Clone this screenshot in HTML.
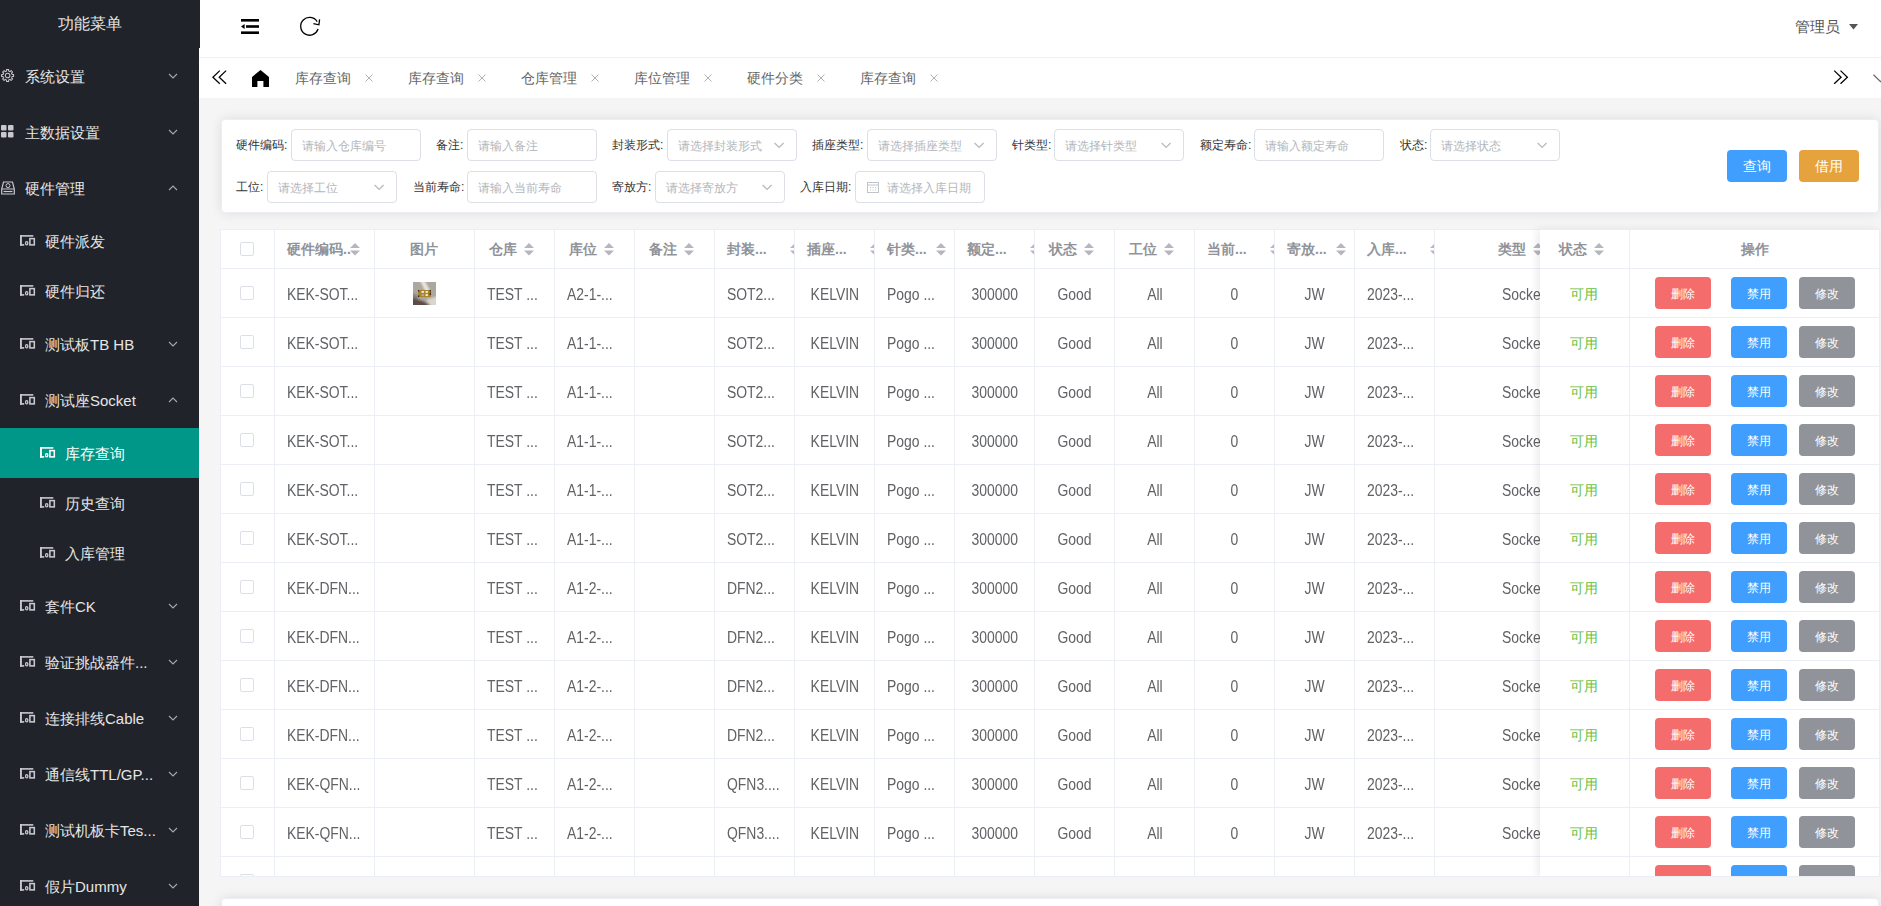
<!DOCTYPE html><html><head><meta charset="utf-8"><title>库存查询</title><style>
*{box-sizing:border-box;margin:0;padding:0}
html,body{width:1881px;height:906px;overflow:hidden;background:#f5f5f5;font-family:"Liberation Sans",sans-serif;position:relative}
.a{position:absolute;white-space:nowrap}
#side{position:absolute;left:0;top:0;width:199px;height:906px;background:#20232a;overflow:hidden}
.st{color:#e6e6e6;font-size:15px;line-height:16px}
.ac{background:#009688}
#hdr{position:absolute;left:199px;top:0;width:1682px;height:58px;background:#fff;border-bottom:1px solid #f0f0f0}
#tabs{position:absolute;left:199px;top:58px;width:1682px;height:40px;background:#fff}
.tb{font-size:14px;color:#666;line-height:16px}
.tx{font-size:12px;color:#b5b5b5;line-height:12px}
#card{position:absolute;left:221px;top:119px;width:1658px;height:94px;background:#fff;border-radius:4px;border:1px solid #ebeef5;box-shadow:0 0 12px rgba(0,0,0,.10)}
.lb{font-size:12px;color:#333;line-height:14px}
.inp{position:absolute;height:32px;border:1px solid #dcdfe6;border-radius:4px;background:#fff}
.ph{font-size:12px;color:#b3b6bc;line-height:14px}
.btn{position:absolute;height:32px;width:60px;border-radius:4px;color:#fff;font-size:14px;text-align:center;line-height:32px}
.hl{position:absolute;height:1px;background:#ebeef5}
.vl{position:absolute;width:1px;background:#ebeef5}
.th{font-size:14px;color:#909399;font-weight:bold;line-height:16px}
.td{font-size:16px;color:#606266;line-height:16px;transform:scaleX(.87)}
.cb{position:absolute;width:14px;height:14px;border:1px solid #dcdfe6;border-radius:2px;background:#fff}
.ob{position:absolute;width:56px;height:32px;border-radius:4px;color:#fff;font-size:12px;text-align:center;line-height:34px;overflow:hidden}
</style></head><body>
<div id="side">
<div class="a st" style="left:58px;top:15px;font-size:16px;line-height:17px;color:#e3e3e3">功能菜单</div>
<svg class="a" style="left:1px;top:69px" width="14" height="14" viewBox="0 0 14 14"><path d="M5.14 2.14 L5.57 2.02 L5.54 0.49 L7.66 0.49 L7.63 2.02 L8.06 2.14 L8.65 2.38 L9.04 2.60 L10.10 1.50 L11.60 3.00 L10.50 4.06 L10.72 4.45 L10.96 5.04 L11.08 5.47 L12.61 5.44 L12.61 7.56 L11.08 7.53 L10.96 7.96 L10.72 8.55 L10.50 8.94 L11.60 10.00 L10.10 11.50 L9.04 10.40 L8.65 10.62 L8.06 10.86 L7.63 10.98 L7.66 12.51 L5.54 12.51 L5.57 10.98 L5.14 10.86 L4.55 10.62 L4.16 10.40 L3.10 11.50 L1.60 10.00 L2.70 8.94 L2.48 8.55 L2.24 7.96 L2.12 7.53 L0.59 7.56 L0.59 5.44 L2.12 5.47 L2.24 5.04 L2.48 4.45 L2.70 4.06 L1.60 3.00 L3.10 1.50 L4.16 2.60 L4.55 2.38 Z" fill="none" stroke="#c8c8d0" stroke-width="1.05" stroke-linejoin="round"/><circle cx="6.6" cy="6.5" r="2.3" fill="none" stroke="#c8c8d0" stroke-width="1.05"/></svg>
<div class="a st" style="left:25px;top:69px">系统设置</div>
<svg class="a" style="left:168px;top:73px" width="10" height="6" viewBox="0 0 10 6"><path d="M1 1 L5 5 L9 1" fill="none" stroke="#a9a9ad" stroke-width="1.1"/></svg>
<svg class="a" style="left:1px;top:125px" width="13" height="13" viewBox="0 0 13 13" fill="#c8c8d0"><rect x="0" y="0" width="5.5" height="5.5" rx="1"/><rect x="7" y="0" width="5.5" height="5.5" rx="1"/><rect x="0" y="7" width="5.5" height="5.5" rx="1"/><rect x="7" y="7" width="5.5" height="5.5" rx="1"/></svg>
<div class="a st" style="left:25px;top:125px">主数据设置</div>
<svg class="a" style="left:168px;top:129px" width="10" height="6" viewBox="0 0 10 6"><path d="M1 1 L5 5 L9 1" fill="none" stroke="#a9a9ad" stroke-width="1.1"/></svg>
<svg class="a" style="left:1px;top:181px" width="14" height="14" viewBox="0 0 14 14"><path d="M2.5 1 H11.5 L13.3 8 V13 H0.7 V8 Z M0.7 8 H13.3" fill="none" stroke="#c8c8d0" stroke-width="1.2"/><circle cx="7" cy="4.6" r="2" fill="none" stroke="#c8c8d0" stroke-width="1"/><path d="M2.5 10.5 H11.5" stroke="#c8c8d0" stroke-width="1.2"/></svg>
<div class="a st" style="left:25px;top:181px">硬件管理</div>
<svg class="a" style="left:168px;top:185px" width="10" height="6" viewBox="0 0 10 6"><path d="M1 5 L5 1 L9 5" fill="none" stroke="#a9a9ad" stroke-width="1.1"/></svg>
<svg class="a" style="left:20px;top:235px" width="16" height="11" viewBox="0 0 16 11" fill="#c8c8d0"><rect x="0" y="0.1" width="13.3" height="1.6"/><rect x="0" y="0" width="1.9" height="10.7"/><rect x="0" y="9.1" width="4.2" height="1.6"/><ellipse cx="6.7" cy="8.3" rx="1.15" ry="1.65" fill="none" stroke="#c8c8d0" stroke-width="1.3"/><rect x="9.9" y="3.6" width="4.4" height="6.3" fill="none" stroke="#c8c8d0" stroke-width="1.55"/></svg>
<div class="a st" style="left:45px;top:234px;">硬件派发</div>
<svg class="a" style="left:20px;top:285px" width="16" height="11" viewBox="0 0 16 11" fill="#c8c8d0"><rect x="0" y="0.1" width="13.3" height="1.6"/><rect x="0" y="0" width="1.9" height="10.7"/><rect x="0" y="9.1" width="4.2" height="1.6"/><ellipse cx="6.7" cy="8.3" rx="1.15" ry="1.65" fill="none" stroke="#c8c8d0" stroke-width="1.3"/><rect x="9.9" y="3.6" width="4.4" height="6.3" fill="none" stroke="#c8c8d0" stroke-width="1.55"/></svg>
<div class="a st" style="left:45px;top:284px;">硬件归还</div>
<svg class="a" style="left:20px;top:338px" width="16" height="11" viewBox="0 0 16 11" fill="#c8c8d0"><rect x="0" y="0.1" width="13.3" height="1.6"/><rect x="0" y="0" width="1.9" height="10.7"/><rect x="0" y="9.1" width="4.2" height="1.6"/><ellipse cx="6.7" cy="8.3" rx="1.15" ry="1.65" fill="none" stroke="#c8c8d0" stroke-width="1.3"/><rect x="9.9" y="3.6" width="4.4" height="6.3" fill="none" stroke="#c8c8d0" stroke-width="1.55"/></svg>
<div class="a st" style="left:45px;top:337px;">测试板TB HB</div>
<svg class="a" style="left:168px;top:341px" width="10" height="6" viewBox="0 0 10 6"><path d="M1 1 L5 5 L9 1" fill="none" stroke="#a9a9ad" stroke-width="1.1"/></svg>
<svg class="a" style="left:20px;top:394px" width="16" height="11" viewBox="0 0 16 11" fill="#c8c8d0"><rect x="0" y="0.1" width="13.3" height="1.6"/><rect x="0" y="0" width="1.9" height="10.7"/><rect x="0" y="9.1" width="4.2" height="1.6"/><ellipse cx="6.7" cy="8.3" rx="1.15" ry="1.65" fill="none" stroke="#c8c8d0" stroke-width="1.3"/><rect x="9.9" y="3.6" width="4.4" height="6.3" fill="none" stroke="#c8c8d0" stroke-width="1.55"/></svg>
<div class="a st" style="left:45px;top:393px;">测试座Socket</div>
<svg class="a" style="left:168px;top:397px" width="10" height="6" viewBox="0 0 10 6"><path d="M1 5 L5 1 L9 5" fill="none" stroke="#a9a9ad" stroke-width="1.1"/></svg>
<div class="a ac" style="left:0;top:428px;width:199px;height:50px"></div>
<svg class="a" style="left:40px;top:447px" width="16" height="11" viewBox="0 0 16 11" fill="#ffffff"><rect x="0" y="0.1" width="13.3" height="1.6"/><rect x="0" y="0" width="1.9" height="10.7"/><rect x="0" y="9.1" width="4.2" height="1.6"/><ellipse cx="6.7" cy="8.3" rx="1.15" ry="1.65" fill="none" stroke="#ffffff" stroke-width="1.3"/><rect x="9.9" y="3.6" width="4.4" height="6.3" fill="none" stroke="#ffffff" stroke-width="1.55"/></svg>
<div class="a st" style="left:65px;top:446px;color:#fff;">库存查询</div>
<svg class="a" style="left:40px;top:497px" width="16" height="11" viewBox="0 0 16 11" fill="#c8c8d0"><rect x="0" y="0.1" width="13.3" height="1.6"/><rect x="0" y="0" width="1.9" height="10.7"/><rect x="0" y="9.1" width="4.2" height="1.6"/><ellipse cx="6.7" cy="8.3" rx="1.15" ry="1.65" fill="none" stroke="#c8c8d0" stroke-width="1.3"/><rect x="9.9" y="3.6" width="4.4" height="6.3" fill="none" stroke="#c8c8d0" stroke-width="1.55"/></svg>
<div class="a st" style="left:65px;top:496px;">历史查询</div>
<svg class="a" style="left:40px;top:547px" width="16" height="11" viewBox="0 0 16 11" fill="#c8c8d0"><rect x="0" y="0.1" width="13.3" height="1.6"/><rect x="0" y="0" width="1.9" height="10.7"/><rect x="0" y="9.1" width="4.2" height="1.6"/><ellipse cx="6.7" cy="8.3" rx="1.15" ry="1.65" fill="none" stroke="#c8c8d0" stroke-width="1.3"/><rect x="9.9" y="3.6" width="4.4" height="6.3" fill="none" stroke="#c8c8d0" stroke-width="1.55"/></svg>
<div class="a st" style="left:65px;top:546px;">入库管理</div>
<svg class="a" style="left:20px;top:600px" width="16" height="11" viewBox="0 0 16 11" fill="#c8c8d0"><rect x="0" y="0.1" width="13.3" height="1.6"/><rect x="0" y="0" width="1.9" height="10.7"/><rect x="0" y="9.1" width="4.2" height="1.6"/><ellipse cx="6.7" cy="8.3" rx="1.15" ry="1.65" fill="none" stroke="#c8c8d0" stroke-width="1.3"/><rect x="9.9" y="3.6" width="4.4" height="6.3" fill="none" stroke="#c8c8d0" stroke-width="1.55"/></svg>
<div class="a st" style="left:45px;top:599px;">套件CK</div>
<svg class="a" style="left:168px;top:603px" width="10" height="6" viewBox="0 0 10 6"><path d="M1 1 L5 5 L9 1" fill="none" stroke="#a9a9ad" stroke-width="1.1"/></svg>
<svg class="a" style="left:20px;top:656px" width="16" height="11" viewBox="0 0 16 11" fill="#c8c8d0"><rect x="0" y="0.1" width="13.3" height="1.6"/><rect x="0" y="0" width="1.9" height="10.7"/><rect x="0" y="9.1" width="4.2" height="1.6"/><ellipse cx="6.7" cy="8.3" rx="1.15" ry="1.65" fill="none" stroke="#c8c8d0" stroke-width="1.3"/><rect x="9.9" y="3.6" width="4.4" height="6.3" fill="none" stroke="#c8c8d0" stroke-width="1.55"/></svg>
<div class="a st" style="left:45px;top:655px;">验证挑战器件...</div>
<svg class="a" style="left:168px;top:659px" width="10" height="6" viewBox="0 0 10 6"><path d="M1 1 L5 5 L9 1" fill="none" stroke="#a9a9ad" stroke-width="1.1"/></svg>
<svg class="a" style="left:20px;top:712px" width="16" height="11" viewBox="0 0 16 11" fill="#c8c8d0"><rect x="0" y="0.1" width="13.3" height="1.6"/><rect x="0" y="0" width="1.9" height="10.7"/><rect x="0" y="9.1" width="4.2" height="1.6"/><ellipse cx="6.7" cy="8.3" rx="1.15" ry="1.65" fill="none" stroke="#c8c8d0" stroke-width="1.3"/><rect x="9.9" y="3.6" width="4.4" height="6.3" fill="none" stroke="#c8c8d0" stroke-width="1.55"/></svg>
<div class="a st" style="left:45px;top:711px;">连接排线Cable</div>
<svg class="a" style="left:168px;top:715px" width="10" height="6" viewBox="0 0 10 6"><path d="M1 1 L5 5 L9 1" fill="none" stroke="#a9a9ad" stroke-width="1.1"/></svg>
<svg class="a" style="left:20px;top:768px" width="16" height="11" viewBox="0 0 16 11" fill="#c8c8d0"><rect x="0" y="0.1" width="13.3" height="1.6"/><rect x="0" y="0" width="1.9" height="10.7"/><rect x="0" y="9.1" width="4.2" height="1.6"/><ellipse cx="6.7" cy="8.3" rx="1.15" ry="1.65" fill="none" stroke="#c8c8d0" stroke-width="1.3"/><rect x="9.9" y="3.6" width="4.4" height="6.3" fill="none" stroke="#c8c8d0" stroke-width="1.55"/></svg>
<div class="a st" style="left:45px;top:767px;">通信线TTL/GP...</div>
<svg class="a" style="left:168px;top:771px" width="10" height="6" viewBox="0 0 10 6"><path d="M1 1 L5 5 L9 1" fill="none" stroke="#a9a9ad" stroke-width="1.1"/></svg>
<svg class="a" style="left:20px;top:824px" width="16" height="11" viewBox="0 0 16 11" fill="#c8c8d0"><rect x="0" y="0.1" width="13.3" height="1.6"/><rect x="0" y="0" width="1.9" height="10.7"/><rect x="0" y="9.1" width="4.2" height="1.6"/><ellipse cx="6.7" cy="8.3" rx="1.15" ry="1.65" fill="none" stroke="#c8c8d0" stroke-width="1.3"/><rect x="9.9" y="3.6" width="4.4" height="6.3" fill="none" stroke="#c8c8d0" stroke-width="1.55"/></svg>
<div class="a st" style="left:45px;top:823px;">测试机板卡Tes...</div>
<svg class="a" style="left:168px;top:827px" width="10" height="6" viewBox="0 0 10 6"><path d="M1 1 L5 5 L9 1" fill="none" stroke="#a9a9ad" stroke-width="1.1"/></svg>
<svg class="a" style="left:20px;top:880px" width="16" height="11" viewBox="0 0 16 11" fill="#c8c8d0"><rect x="0" y="0.1" width="13.3" height="1.6"/><rect x="0" y="0" width="1.9" height="10.7"/><rect x="0" y="9.1" width="4.2" height="1.6"/><ellipse cx="6.7" cy="8.3" rx="1.15" ry="1.65" fill="none" stroke="#c8c8d0" stroke-width="1.3"/><rect x="9.9" y="3.6" width="4.4" height="6.3" fill="none" stroke="#c8c8d0" stroke-width="1.55"/></svg>
<div class="a st" style="left:45px;top:879px;">假片Dummy</div>
<svg class="a" style="left:168px;top:883px" width="10" height="6" viewBox="0 0 10 6"><path d="M1 1 L5 5 L9 1" fill="none" stroke="#a9a9ad" stroke-width="1.1"/></svg>
</div>
<div id="hdr"></div>
<div class="a" style="left:199px;top:0;width:1px;height:48px;background:#20232a"></div>
<svg class="a" style="left:241px;top:19px" width="18" height="15" viewBox="0 0 18 15" fill="#000"><rect x="0" y="0" width="18" height="2.6"/><rect x="5" y="6.2" width="13" height="2.6"/><rect x="0" y="12.4" width="18" height="2.6"/><path d="M0 7.5 L3.6 5 V10 Z"/></svg>
<svg class="a" style="left:299px;top:16px" width="22" height="21" viewBox="0 0 22 21"><path d="M19.06 13.05 A8.9 8.9 0 1 1 18.15 5.58" fill="none" stroke="#000" stroke-width="1.3"/><path d="M14.4 7.7 L19.9 8.8 L20.6 3.3" fill="none" stroke="#000" stroke-width="1.3" stroke-linejoin="miter"/></svg>
<div class="a" style="left:1795px;top:19px;font-size:15px;color:#555;line-height:16px">管理员</div>
<svg class="a" style="left:1849px;top:24px" width="9" height="6" viewBox="0 0 9 6"><path d="M0 0 H9 L4.5 5.5 Z" fill="#555"/></svg>
<div id="tabs"></div>
<svg class="a" style="left:212px;top:70px" width="16" height="15" viewBox="0 0 16 15"><path d="M7.8 0.6 L0.9 7.2 L7.8 13.8 M14.1 0.6 L7.2 7.2 L14.1 13.8" fill="none" stroke="#000" stroke-width="1.25"/></svg>
<svg class="a" style="left:251px;top:70px" width="19" height="17" viewBox="0 0 19 17"><path d="M9.5 0 L18 6.9 V17 H12.4 V11.1 H6.4 V17 H1 V6.9 Z" fill="#000"/></svg>
<div class="a tb" style="left:295px;top:70px">库存查询</div>
<svg class="a" style="left:365px;top:74px" width="8" height="8" viewBox="0 0 8 8"><path d="M0.5 0.5 L7.5 7.5 M7.5 0.5 L0.5 7.5" stroke="#b0b0b0" stroke-width="1"/></svg>
<div class="a tb" style="left:408px;top:70px">库存查询</div>
<svg class="a" style="left:478px;top:74px" width="8" height="8" viewBox="0 0 8 8"><path d="M0.5 0.5 L7.5 7.5 M7.5 0.5 L0.5 7.5" stroke="#b0b0b0" stroke-width="1"/></svg>
<div class="a tb" style="left:521px;top:70px">仓库管理</div>
<svg class="a" style="left:591px;top:74px" width="8" height="8" viewBox="0 0 8 8"><path d="M0.5 0.5 L7.5 7.5 M7.5 0.5 L0.5 7.5" stroke="#b0b0b0" stroke-width="1"/></svg>
<div class="a tb" style="left:634px;top:70px">库位管理</div>
<svg class="a" style="left:704px;top:74px" width="8" height="8" viewBox="0 0 8 8"><path d="M0.5 0.5 L7.5 7.5 M7.5 0.5 L0.5 7.5" stroke="#b0b0b0" stroke-width="1"/></svg>
<div class="a tb" style="left:747px;top:70px">硬件分类</div>
<svg class="a" style="left:817px;top:74px" width="8" height="8" viewBox="0 0 8 8"><path d="M0.5 0.5 L7.5 7.5 M7.5 0.5 L0.5 7.5" stroke="#b0b0b0" stroke-width="1"/></svg>
<div class="a tb" style="left:860px;top:70px">库存查询</div>
<svg class="a" style="left:930px;top:74px" width="8" height="8" viewBox="0 0 8 8"><path d="M0.5 0.5 L7.5 7.5 M7.5 0.5 L0.5 7.5" stroke="#b0b0b0" stroke-width="1"/></svg>
<svg class="a" style="left:1833px;top:70px" width="16" height="14" viewBox="0 0 16 14"><path d="M1.2 0.6 L8.1 7.2 L1.2 13.8 M7.5 0.6 L14.4 7.2 L7.5 13.8" fill="none" stroke="#000" stroke-width="1.25"/></svg>
<svg class="a" style="left:1873px;top:74px" width="9" height="9" viewBox="0 0 9 9"><path d="M0.5 0.7 L7.6 7.6 L9 6.4" fill="none" stroke="#666" stroke-width="1.2"/></svg>
<div id="card"></div>
<div class="a lb" style="left:236px;top:138px">硬件编码:</div>
<div class="inp" style="left:291px;top:129px;width:130px"></div>
<div class="a ph" style="left:302px;top:139px">请输入仓库编号</div>
<div class="a lb" style="left:436px;top:138px">备注:</div>
<div class="inp" style="left:467px;top:129px;width:130px"></div>
<div class="a ph" style="left:478px;top:139px">请输入备注</div>
<div class="a lb" style="left:612px;top:138px">封装形式:</div>
<div class="inp" style="left:667px;top:129px;width:130px"></div>
<div class="a ph" style="left:678px;top:139px">请选择封装形式</div>
<svg class="a" style="left:774px;top:142px" width="11" height="7" viewBox="0 0 11 7"><path d="M0.6 0.9 L5.1 5.4 L9.6 0.9" fill="none" stroke="#b9bbbf" stroke-width="1.35"/></svg>
<div class="a lb" style="left:812px;top:138px">插座类型:</div>
<div class="inp" style="left:867px;top:129px;width:130px"></div>
<div class="a ph" style="left:878px;top:139px">请选择插座类型</div>
<svg class="a" style="left:974px;top:142px" width="11" height="7" viewBox="0 0 11 7"><path d="M0.6 0.9 L5.1 5.4 L9.6 0.9" fill="none" stroke="#b9bbbf" stroke-width="1.35"/></svg>
<div class="a lb" style="left:1012px;top:138px">针类型:</div>
<div class="inp" style="left:1054px;top:129px;width:130px"></div>
<div class="a ph" style="left:1065px;top:139px">请选择针类型</div>
<svg class="a" style="left:1161px;top:142px" width="11" height="7" viewBox="0 0 11 7"><path d="M0.6 0.9 L5.1 5.4 L9.6 0.9" fill="none" stroke="#b9bbbf" stroke-width="1.35"/></svg>
<div class="a lb" style="left:1200px;top:138px">额定寿命:</div>
<div class="inp" style="left:1254px;top:129px;width:130px"></div>
<div class="a ph" style="left:1265px;top:139px">请输入额定寿命</div>
<div class="a lb" style="left:1400px;top:138px">状态:</div>
<div class="inp" style="left:1430px;top:129px;width:130px"></div>
<div class="a ph" style="left:1441px;top:139px">请选择状态</div>
<svg class="a" style="left:1537px;top:142px" width="11" height="7" viewBox="0 0 11 7"><path d="M0.6 0.9 L5.1 5.4 L9.6 0.9" fill="none" stroke="#b9bbbf" stroke-width="1.35"/></svg>
<div class="a lb" style="left:236px;top:180px">工位:</div>
<div class="inp" style="left:267px;top:171px;width:130px"></div>
<div class="a ph" style="left:278px;top:181px">请选择工位</div>
<svg class="a" style="left:374px;top:184px" width="11" height="7" viewBox="0 0 11 7"><path d="M0.6 0.9 L5.1 5.4 L9.6 0.9" fill="none" stroke="#b9bbbf" stroke-width="1.35"/></svg>
<div class="a lb" style="left:413px;top:180px">当前寿命:</div>
<div class="inp" style="left:467px;top:171px;width:130px"></div>
<div class="a ph" style="left:478px;top:181px">请输入当前寿命</div>
<div class="a lb" style="left:612px;top:180px">寄放方:</div>
<div class="inp" style="left:655px;top:171px;width:130px"></div>
<div class="a ph" style="left:666px;top:181px">请选择寄放方</div>
<svg class="a" style="left:762px;top:184px" width="11" height="7" viewBox="0 0 11 7"><path d="M0.6 0.9 L5.1 5.4 L9.6 0.9" fill="none" stroke="#b9bbbf" stroke-width="1.35"/></svg>
<div class="a lb" style="left:800px;top:180px">入库日期:</div>
<div class="inp" style="left:855px;top:171px;width:130px"></div>
<svg class="a" style="left:867px;top:181px" width="12" height="12" viewBox="0 0 12 12"><rect x="0.5" y="1.5" width="11" height="10" fill="none" stroke="#c0c4cc"/><path d="M0.5 4 H11.5 M3 6.5 h1 M5.5 6.5 h1 M8 6.5 h1 M3 9 h1 M5.5 9 h1 M8 9 h1" stroke="#c0c4cc"/></svg>
<div class="a ph" style="left:887px;top:181px">请选择入库日期</div>
<div class="btn" style="left:1727px;top:150px;background:#409eff">查询</div>
<div class="btn" style="left:1799px;top:150px;background:#e6a23c">借用</div>
<div class="a" style="left:0;top:0;width:1881px;height:876px;overflow:hidden">
<div class="a" style="left:220px;top:229px;width:1660px;height:648px;background:#fff"></div>
<div class="hl" style="left:220px;top:229px;width:1320px"></div>
<div class="hl" style="left:220px;top:268px;width:1320px"></div>
<div class="hl" style="left:220px;top:317px;width:1320px"></div>
<div class="hl" style="left:220px;top:366px;width:1320px"></div>
<div class="hl" style="left:220px;top:415px;width:1320px"></div>
<div class="hl" style="left:220px;top:464px;width:1320px"></div>
<div class="hl" style="left:220px;top:513px;width:1320px"></div>
<div class="hl" style="left:220px;top:562px;width:1320px"></div>
<div class="hl" style="left:220px;top:611px;width:1320px"></div>
<div class="hl" style="left:220px;top:660px;width:1320px"></div>
<div class="hl" style="left:220px;top:709px;width:1320px"></div>
<div class="hl" style="left:220px;top:758px;width:1320px"></div>
<div class="hl" style="left:220px;top:807px;width:1320px"></div>
<div class="hl" style="left:220px;top:856px;width:1320px"></div>
<div class="hl" style="left:220px;top:876px;width:1320px"></div>
<div class="vl" style="left:220px;top:229px;height:648px"></div>
<div class="vl" style="left:274px;top:229px;height:648px"></div>
<div class="vl" style="left:374px;top:229px;height:648px"></div>
<div class="vl" style="left:474px;top:229px;height:648px"></div>
<div class="vl" style="left:554px;top:229px;height:648px"></div>
<div class="vl" style="left:634px;top:229px;height:648px"></div>
<div class="vl" style="left:714px;top:229px;height:648px"></div>
<div class="vl" style="left:794px;top:229px;height:648px"></div>
<div class="vl" style="left:874px;top:229px;height:648px"></div>
<div class="vl" style="left:954px;top:229px;height:648px"></div>
<div class="vl" style="left:1034px;top:229px;height:648px"></div>
<div class="vl" style="left:1114px;top:229px;height:648px"></div>
<div class="vl" style="left:1194px;top:229px;height:648px"></div>
<div class="vl" style="left:1274px;top:229px;height:648px"></div>
<div class="vl" style="left:1354px;top:229px;height:648px"></div>
<div class="vl" style="left:1434px;top:229px;height:648px"></div>
<div class="cb" style="left:240px;top:242px"></div>
<div class="a th" style="left:287px;top:241px">硬件编码..</div>
<svg class="a" style="left:350px;top:243px" width="10" height="13" viewBox="0 0 10 13"><path d="M5 0 L10 5 H0 Z M0 7.5 H10 L5 12.5 Z" fill="#b4b7be"/></svg>
<div class="a th" style="left:410px;top:241px">图片</div>
<div class="a th" style="left:489px;top:241px">仓库</div>
<svg class="a" style="left:524px;top:243px" width="10" height="13" viewBox="0 0 10 13"><path d="M5 0 L10 5 H0 Z M0 7.5 H10 L5 12.5 Z" fill="#b4b7be"/></svg>
<div class="a th" style="left:569px;top:241px">库位</div>
<svg class="a" style="left:604px;top:243px" width="10" height="13" viewBox="0 0 10 13"><path d="M5 0 L10 5 H0 Z M0 7.5 H10 L5 12.5 Z" fill="#b4b7be"/></svg>
<div class="a th" style="left:649px;top:241px">备注</div>
<svg class="a" style="left:684px;top:243px" width="10" height="13" viewBox="0 0 10 13"><path d="M5 0 L10 5 H0 Z M0 7.5 H10 L5 12.5 Z" fill="#b4b7be"/></svg>
<div class="a th" style="left:727px;top:241px">封装...</div>
<div class="a" style="left:790px;top:243px;width:4px;height:13px;overflow:hidden"><svg style="position:absolute;left:0;top:0" width="10" height="13" viewBox="0 0 10 13"><path d="M5 0 L10 5 H0 Z M0 7.5 H10 L5 12.5 Z" fill="#b4b7be"/></svg></div>
<div class="a th" style="left:807px;top:241px">插座...</div>
<div class="a" style="left:870px;top:243px;width:4px;height:13px;overflow:hidden"><svg style="position:absolute;left:0;top:0" width="10" height="13" viewBox="0 0 10 13"><path d="M5 0 L10 5 H0 Z M0 7.5 H10 L5 12.5 Z" fill="#b4b7be"/></svg></div>
<div class="a th" style="left:887px;top:241px">针类...</div>
<svg class="a" style="left:936px;top:243px" width="10" height="13" viewBox="0 0 10 13"><path d="M5 0 L10 5 H0 Z M0 7.5 H10 L5 12.5 Z" fill="#b4b7be"/></svg>
<div class="a th" style="left:967px;top:241px">额定...</div>
<div class="a" style="left:1030px;top:243px;width:4px;height:13px;overflow:hidden"><svg style="position:absolute;left:0;top:0" width="10" height="13" viewBox="0 0 10 13"><path d="M5 0 L10 5 H0 Z M0 7.5 H10 L5 12.5 Z" fill="#b4b7be"/></svg></div>
<div class="a th" style="left:1049px;top:241px">状态</div>
<svg class="a" style="left:1084px;top:243px" width="10" height="13" viewBox="0 0 10 13"><path d="M5 0 L10 5 H0 Z M0 7.5 H10 L5 12.5 Z" fill="#b4b7be"/></svg>
<div class="a th" style="left:1129px;top:241px">工位</div>
<svg class="a" style="left:1164px;top:243px" width="10" height="13" viewBox="0 0 10 13"><path d="M5 0 L10 5 H0 Z M0 7.5 H10 L5 12.5 Z" fill="#b4b7be"/></svg>
<div class="a th" style="left:1207px;top:241px">当前...</div>
<div class="a" style="left:1270px;top:243px;width:4px;height:13px;overflow:hidden"><svg style="position:absolute;left:0;top:0" width="10" height="13" viewBox="0 0 10 13"><path d="M5 0 L10 5 H0 Z M0 7.5 H10 L5 12.5 Z" fill="#b4b7be"/></svg></div>
<div class="a th" style="left:1287px;top:241px">寄放...</div>
<svg class="a" style="left:1336px;top:243px" width="10" height="13" viewBox="0 0 10 13"><path d="M5 0 L10 5 H0 Z M0 7.5 H10 L5 12.5 Z" fill="#b4b7be"/></svg>
<div class="a th" style="left:1367px;top:241px">入库...</div>
<div class="a" style="left:1430px;top:243px;width:4px;height:13px;overflow:hidden"><svg style="position:absolute;left:0;top:0" width="10" height="13" viewBox="0 0 10 13"><path d="M5 0 L10 5 H0 Z M0 7.5 H10 L5 12.5 Z" fill="#b4b7be"/></svg></div>
<div class="a th" style="left:1498px;top:241px">类型</div>
<div class="a" style="left:1533px;top:243px;width:7px;height:13px;overflow:hidden"><svg style="position:absolute;left:0;top:0" width="10" height="13" viewBox="0 0 10 13"><path d="M5 0 L10 5 H0 Z M0 7.5 H10 L5 12.5 Z" fill="#b4b7be"/></svg></div>
<div class="cb" style="left:240px;top:286px"></div>
<div class="a td" style="left:287px;top:287px;transform-origin:0 0;">KEK-SOT...</div>
<svg class="a" style="left:413px;top:282px" width="23" height="23" viewBox="0 0 23 23"><defs><filter id="bl" x="-10%" y="-10%" width="120%" height="120%"><feGaussianBlur stdDeviation="0.9"/></filter><filter id="bl2" x="-50%" y="-50%" width="200%" height="200%"><feGaussianBlur stdDeviation="0.35"/></filter><clipPath id="cp"><rect width="23" height="23"/></clipPath></defs><g clip-path="url(#cp)"><rect width="23" height="23" fill="#aba69f"/><g filter="url(#bl)"><path d="M-2 -2 H25 V25 H-2 Z" fill="#aca79f"/><path d="M-2 11 L6 14 L4 18 L-2 18 Z" fill="#7d7f86"/><path d="M-2 16 C4 17 12 18 18 25 H-2 Z" fill="#5f4c43"/><path d="M7 -2 L11 -2 L17 9 L13 10 Z" fill="#eeeae3"/><path d="M13 18 L25 14 L25 25 L19 25 Z" fill="#d9d5cf"/></g><rect x="5" y="8" width="13" height="7" fill="#a9842e"/><g filter="url(#bl2)"><rect x="8.5" y="9" width="2.4" height="1.8" fill="#f4efe0"/><rect x="12.5" y="9" width="2.4" height="1.8" fill="#f4efe0"/><rect x="8.5" y="12.2" width="2.4" height="1.8" fill="#9fb0b8"/><rect x="12.5" y="12.2" width="2.4" height="1.8" fill="#f4efe0"/></g><rect x="5" y="8" width="1.3" height="1.5" fill="#3c2e14"/><rect x="5" y="13.5" width="1.3" height="1.5" fill="#3c2e14"/><rect x="16.7" y="8" width="1.3" height="1.5" fill="#3c2e14"/><rect x="16.7" y="10.5" width="1.3" height="2.5" fill="#3c2e14"/></g></svg>
<div class="a td" style="left:487px;top:287px;transform-origin:0 0;">TEST ...</div>
<div class="a td" style="left:567px;top:287px;transform-origin:0 0;">A2-1-...</div>
<div class="a td" style="left:727px;top:287px;transform-origin:0 0;">SOT2...</div>
<div class="a" style="left:795px;width:79px;text-align:center;top:287px;font-size:16px;line-height:16px"><span class="td" style="display:inline-block;transform-origin:50% 0;">KELVIN</span></div>
<div class="a td" style="left:887px;top:287px;transform-origin:0 0;">Pogo ...</div>
<div class="a" style="left:955px;width:79px;text-align:center;top:287px;font-size:16px;line-height:16px"><span class="td" style="display:inline-block;transform-origin:50% 0;">300000</span></div>
<div class="a" style="left:1035px;width:79px;text-align:center;top:287px;font-size:16px;line-height:16px"><span class="td" style="display:inline-block;transform-origin:50% 0;">Good</span></div>
<div class="a" style="left:1115px;width:79px;text-align:center;top:287px;font-size:16px;line-height:16px"><span class="td" style="display:inline-block;transform-origin:50% 0;">All</span></div>
<div class="a" style="left:1195px;width:79px;text-align:center;top:287px;font-size:16px;line-height:16px"><span class="td" style="display:inline-block;transform-origin:50% 0;">0</span></div>
<div class="a" style="left:1275px;width:79px;text-align:center;top:287px;font-size:16px;line-height:16px"><span class="td" style="display:inline-block;transform-origin:50% 0;">JW</span></div>
<div class="a td" style="left:1367px;top:287px;transform-origin:0 0;">2023-...</div>
<div class="a td" style="left:1502px;top:287px;transform-origin:0 0">Socket</div>
<div class="cb" style="left:240px;top:335px"></div>
<div class="a td" style="left:287px;top:336px;transform-origin:0 0;">KEK-SOT...</div>
<div class="a td" style="left:487px;top:336px;transform-origin:0 0;">TEST ...</div>
<div class="a td" style="left:567px;top:336px;transform-origin:0 0;">A1-1-...</div>
<div class="a td" style="left:727px;top:336px;transform-origin:0 0;">SOT2...</div>
<div class="a" style="left:795px;width:79px;text-align:center;top:336px;font-size:16px;line-height:16px"><span class="td" style="display:inline-block;transform-origin:50% 0;">KELVIN</span></div>
<div class="a td" style="left:887px;top:336px;transform-origin:0 0;">Pogo ...</div>
<div class="a" style="left:955px;width:79px;text-align:center;top:336px;font-size:16px;line-height:16px"><span class="td" style="display:inline-block;transform-origin:50% 0;">300000</span></div>
<div class="a" style="left:1035px;width:79px;text-align:center;top:336px;font-size:16px;line-height:16px"><span class="td" style="display:inline-block;transform-origin:50% 0;">Good</span></div>
<div class="a" style="left:1115px;width:79px;text-align:center;top:336px;font-size:16px;line-height:16px"><span class="td" style="display:inline-block;transform-origin:50% 0;">All</span></div>
<div class="a" style="left:1195px;width:79px;text-align:center;top:336px;font-size:16px;line-height:16px"><span class="td" style="display:inline-block;transform-origin:50% 0;">0</span></div>
<div class="a" style="left:1275px;width:79px;text-align:center;top:336px;font-size:16px;line-height:16px"><span class="td" style="display:inline-block;transform-origin:50% 0;">JW</span></div>
<div class="a td" style="left:1367px;top:336px;transform-origin:0 0;">2023-...</div>
<div class="a td" style="left:1502px;top:336px;transform-origin:0 0">Socket</div>
<div class="cb" style="left:240px;top:384px"></div>
<div class="a td" style="left:287px;top:385px;transform-origin:0 0;">KEK-SOT...</div>
<div class="a td" style="left:487px;top:385px;transform-origin:0 0;">TEST ...</div>
<div class="a td" style="left:567px;top:385px;transform-origin:0 0;">A1-1-...</div>
<div class="a td" style="left:727px;top:385px;transform-origin:0 0;">SOT2...</div>
<div class="a" style="left:795px;width:79px;text-align:center;top:385px;font-size:16px;line-height:16px"><span class="td" style="display:inline-block;transform-origin:50% 0;">KELVIN</span></div>
<div class="a td" style="left:887px;top:385px;transform-origin:0 0;">Pogo ...</div>
<div class="a" style="left:955px;width:79px;text-align:center;top:385px;font-size:16px;line-height:16px"><span class="td" style="display:inline-block;transform-origin:50% 0;">300000</span></div>
<div class="a" style="left:1035px;width:79px;text-align:center;top:385px;font-size:16px;line-height:16px"><span class="td" style="display:inline-block;transform-origin:50% 0;">Good</span></div>
<div class="a" style="left:1115px;width:79px;text-align:center;top:385px;font-size:16px;line-height:16px"><span class="td" style="display:inline-block;transform-origin:50% 0;">All</span></div>
<div class="a" style="left:1195px;width:79px;text-align:center;top:385px;font-size:16px;line-height:16px"><span class="td" style="display:inline-block;transform-origin:50% 0;">0</span></div>
<div class="a" style="left:1275px;width:79px;text-align:center;top:385px;font-size:16px;line-height:16px"><span class="td" style="display:inline-block;transform-origin:50% 0;">JW</span></div>
<div class="a td" style="left:1367px;top:385px;transform-origin:0 0;">2023-...</div>
<div class="a td" style="left:1502px;top:385px;transform-origin:0 0">Socket</div>
<div class="cb" style="left:240px;top:433px"></div>
<div class="a td" style="left:287px;top:434px;transform-origin:0 0;">KEK-SOT...</div>
<div class="a td" style="left:487px;top:434px;transform-origin:0 0;">TEST ...</div>
<div class="a td" style="left:567px;top:434px;transform-origin:0 0;">A1-1-...</div>
<div class="a td" style="left:727px;top:434px;transform-origin:0 0;">SOT2...</div>
<div class="a" style="left:795px;width:79px;text-align:center;top:434px;font-size:16px;line-height:16px"><span class="td" style="display:inline-block;transform-origin:50% 0;">KELVIN</span></div>
<div class="a td" style="left:887px;top:434px;transform-origin:0 0;">Pogo ...</div>
<div class="a" style="left:955px;width:79px;text-align:center;top:434px;font-size:16px;line-height:16px"><span class="td" style="display:inline-block;transform-origin:50% 0;">300000</span></div>
<div class="a" style="left:1035px;width:79px;text-align:center;top:434px;font-size:16px;line-height:16px"><span class="td" style="display:inline-block;transform-origin:50% 0;">Good</span></div>
<div class="a" style="left:1115px;width:79px;text-align:center;top:434px;font-size:16px;line-height:16px"><span class="td" style="display:inline-block;transform-origin:50% 0;">All</span></div>
<div class="a" style="left:1195px;width:79px;text-align:center;top:434px;font-size:16px;line-height:16px"><span class="td" style="display:inline-block;transform-origin:50% 0;">0</span></div>
<div class="a" style="left:1275px;width:79px;text-align:center;top:434px;font-size:16px;line-height:16px"><span class="td" style="display:inline-block;transform-origin:50% 0;">JW</span></div>
<div class="a td" style="left:1367px;top:434px;transform-origin:0 0;">2023-...</div>
<div class="a td" style="left:1502px;top:434px;transform-origin:0 0">Socket</div>
<div class="cb" style="left:240px;top:482px"></div>
<div class="a td" style="left:287px;top:483px;transform-origin:0 0;">KEK-SOT...</div>
<div class="a td" style="left:487px;top:483px;transform-origin:0 0;">TEST ...</div>
<div class="a td" style="left:567px;top:483px;transform-origin:0 0;">A1-1-...</div>
<div class="a td" style="left:727px;top:483px;transform-origin:0 0;">SOT2...</div>
<div class="a" style="left:795px;width:79px;text-align:center;top:483px;font-size:16px;line-height:16px"><span class="td" style="display:inline-block;transform-origin:50% 0;">KELVIN</span></div>
<div class="a td" style="left:887px;top:483px;transform-origin:0 0;">Pogo ...</div>
<div class="a" style="left:955px;width:79px;text-align:center;top:483px;font-size:16px;line-height:16px"><span class="td" style="display:inline-block;transform-origin:50% 0;">300000</span></div>
<div class="a" style="left:1035px;width:79px;text-align:center;top:483px;font-size:16px;line-height:16px"><span class="td" style="display:inline-block;transform-origin:50% 0;">Good</span></div>
<div class="a" style="left:1115px;width:79px;text-align:center;top:483px;font-size:16px;line-height:16px"><span class="td" style="display:inline-block;transform-origin:50% 0;">All</span></div>
<div class="a" style="left:1195px;width:79px;text-align:center;top:483px;font-size:16px;line-height:16px"><span class="td" style="display:inline-block;transform-origin:50% 0;">0</span></div>
<div class="a" style="left:1275px;width:79px;text-align:center;top:483px;font-size:16px;line-height:16px"><span class="td" style="display:inline-block;transform-origin:50% 0;">JW</span></div>
<div class="a td" style="left:1367px;top:483px;transform-origin:0 0;">2023-...</div>
<div class="a td" style="left:1502px;top:483px;transform-origin:0 0">Socket</div>
<div class="cb" style="left:240px;top:531px"></div>
<div class="a td" style="left:287px;top:532px;transform-origin:0 0;">KEK-SOT...</div>
<div class="a td" style="left:487px;top:532px;transform-origin:0 0;">TEST ...</div>
<div class="a td" style="left:567px;top:532px;transform-origin:0 0;">A1-1-...</div>
<div class="a td" style="left:727px;top:532px;transform-origin:0 0;">SOT2...</div>
<div class="a" style="left:795px;width:79px;text-align:center;top:532px;font-size:16px;line-height:16px"><span class="td" style="display:inline-block;transform-origin:50% 0;">KELVIN</span></div>
<div class="a td" style="left:887px;top:532px;transform-origin:0 0;">Pogo ...</div>
<div class="a" style="left:955px;width:79px;text-align:center;top:532px;font-size:16px;line-height:16px"><span class="td" style="display:inline-block;transform-origin:50% 0;">300000</span></div>
<div class="a" style="left:1035px;width:79px;text-align:center;top:532px;font-size:16px;line-height:16px"><span class="td" style="display:inline-block;transform-origin:50% 0;">Good</span></div>
<div class="a" style="left:1115px;width:79px;text-align:center;top:532px;font-size:16px;line-height:16px"><span class="td" style="display:inline-block;transform-origin:50% 0;">All</span></div>
<div class="a" style="left:1195px;width:79px;text-align:center;top:532px;font-size:16px;line-height:16px"><span class="td" style="display:inline-block;transform-origin:50% 0;">0</span></div>
<div class="a" style="left:1275px;width:79px;text-align:center;top:532px;font-size:16px;line-height:16px"><span class="td" style="display:inline-block;transform-origin:50% 0;">JW</span></div>
<div class="a td" style="left:1367px;top:532px;transform-origin:0 0;">2023-...</div>
<div class="a td" style="left:1502px;top:532px;transform-origin:0 0">Socket</div>
<div class="cb" style="left:240px;top:580px"></div>
<div class="a td" style="left:287px;top:581px;transform-origin:0 0;">KEK-DFN...</div>
<div class="a td" style="left:487px;top:581px;transform-origin:0 0;">TEST ...</div>
<div class="a td" style="left:567px;top:581px;transform-origin:0 0;">A1-2-...</div>
<div class="a td" style="left:727px;top:581px;transform-origin:0 0;">DFN2...</div>
<div class="a" style="left:795px;width:79px;text-align:center;top:581px;font-size:16px;line-height:16px"><span class="td" style="display:inline-block;transform-origin:50% 0;">KELVIN</span></div>
<div class="a td" style="left:887px;top:581px;transform-origin:0 0;">Pogo ...</div>
<div class="a" style="left:955px;width:79px;text-align:center;top:581px;font-size:16px;line-height:16px"><span class="td" style="display:inline-block;transform-origin:50% 0;">300000</span></div>
<div class="a" style="left:1035px;width:79px;text-align:center;top:581px;font-size:16px;line-height:16px"><span class="td" style="display:inline-block;transform-origin:50% 0;">Good</span></div>
<div class="a" style="left:1115px;width:79px;text-align:center;top:581px;font-size:16px;line-height:16px"><span class="td" style="display:inline-block;transform-origin:50% 0;">All</span></div>
<div class="a" style="left:1195px;width:79px;text-align:center;top:581px;font-size:16px;line-height:16px"><span class="td" style="display:inline-block;transform-origin:50% 0;">0</span></div>
<div class="a" style="left:1275px;width:79px;text-align:center;top:581px;font-size:16px;line-height:16px"><span class="td" style="display:inline-block;transform-origin:50% 0;">JW</span></div>
<div class="a td" style="left:1367px;top:581px;transform-origin:0 0;">2023-...</div>
<div class="a td" style="left:1502px;top:581px;transform-origin:0 0">Socket</div>
<div class="cb" style="left:240px;top:629px"></div>
<div class="a td" style="left:287px;top:630px;transform-origin:0 0;">KEK-DFN...</div>
<div class="a td" style="left:487px;top:630px;transform-origin:0 0;">TEST ...</div>
<div class="a td" style="left:567px;top:630px;transform-origin:0 0;">A1-2-...</div>
<div class="a td" style="left:727px;top:630px;transform-origin:0 0;">DFN2...</div>
<div class="a" style="left:795px;width:79px;text-align:center;top:630px;font-size:16px;line-height:16px"><span class="td" style="display:inline-block;transform-origin:50% 0;">KELVIN</span></div>
<div class="a td" style="left:887px;top:630px;transform-origin:0 0;">Pogo ...</div>
<div class="a" style="left:955px;width:79px;text-align:center;top:630px;font-size:16px;line-height:16px"><span class="td" style="display:inline-block;transform-origin:50% 0;">300000</span></div>
<div class="a" style="left:1035px;width:79px;text-align:center;top:630px;font-size:16px;line-height:16px"><span class="td" style="display:inline-block;transform-origin:50% 0;">Good</span></div>
<div class="a" style="left:1115px;width:79px;text-align:center;top:630px;font-size:16px;line-height:16px"><span class="td" style="display:inline-block;transform-origin:50% 0;">All</span></div>
<div class="a" style="left:1195px;width:79px;text-align:center;top:630px;font-size:16px;line-height:16px"><span class="td" style="display:inline-block;transform-origin:50% 0;">0</span></div>
<div class="a" style="left:1275px;width:79px;text-align:center;top:630px;font-size:16px;line-height:16px"><span class="td" style="display:inline-block;transform-origin:50% 0;">JW</span></div>
<div class="a td" style="left:1367px;top:630px;transform-origin:0 0;">2023-...</div>
<div class="a td" style="left:1502px;top:630px;transform-origin:0 0">Socket</div>
<div class="cb" style="left:240px;top:678px"></div>
<div class="a td" style="left:287px;top:679px;transform-origin:0 0;">KEK-DFN...</div>
<div class="a td" style="left:487px;top:679px;transform-origin:0 0;">TEST ...</div>
<div class="a td" style="left:567px;top:679px;transform-origin:0 0;">A1-2-...</div>
<div class="a td" style="left:727px;top:679px;transform-origin:0 0;">DFN2...</div>
<div class="a" style="left:795px;width:79px;text-align:center;top:679px;font-size:16px;line-height:16px"><span class="td" style="display:inline-block;transform-origin:50% 0;">KELVIN</span></div>
<div class="a td" style="left:887px;top:679px;transform-origin:0 0;">Pogo ...</div>
<div class="a" style="left:955px;width:79px;text-align:center;top:679px;font-size:16px;line-height:16px"><span class="td" style="display:inline-block;transform-origin:50% 0;">300000</span></div>
<div class="a" style="left:1035px;width:79px;text-align:center;top:679px;font-size:16px;line-height:16px"><span class="td" style="display:inline-block;transform-origin:50% 0;">Good</span></div>
<div class="a" style="left:1115px;width:79px;text-align:center;top:679px;font-size:16px;line-height:16px"><span class="td" style="display:inline-block;transform-origin:50% 0;">All</span></div>
<div class="a" style="left:1195px;width:79px;text-align:center;top:679px;font-size:16px;line-height:16px"><span class="td" style="display:inline-block;transform-origin:50% 0;">0</span></div>
<div class="a" style="left:1275px;width:79px;text-align:center;top:679px;font-size:16px;line-height:16px"><span class="td" style="display:inline-block;transform-origin:50% 0;">JW</span></div>
<div class="a td" style="left:1367px;top:679px;transform-origin:0 0;">2023-...</div>
<div class="a td" style="left:1502px;top:679px;transform-origin:0 0">Socket</div>
<div class="cb" style="left:240px;top:727px"></div>
<div class="a td" style="left:287px;top:728px;transform-origin:0 0;">KEK-DFN...</div>
<div class="a td" style="left:487px;top:728px;transform-origin:0 0;">TEST ...</div>
<div class="a td" style="left:567px;top:728px;transform-origin:0 0;">A1-2-...</div>
<div class="a td" style="left:727px;top:728px;transform-origin:0 0;">DFN2...</div>
<div class="a" style="left:795px;width:79px;text-align:center;top:728px;font-size:16px;line-height:16px"><span class="td" style="display:inline-block;transform-origin:50% 0;">KELVIN</span></div>
<div class="a td" style="left:887px;top:728px;transform-origin:0 0;">Pogo ...</div>
<div class="a" style="left:955px;width:79px;text-align:center;top:728px;font-size:16px;line-height:16px"><span class="td" style="display:inline-block;transform-origin:50% 0;">300000</span></div>
<div class="a" style="left:1035px;width:79px;text-align:center;top:728px;font-size:16px;line-height:16px"><span class="td" style="display:inline-block;transform-origin:50% 0;">Good</span></div>
<div class="a" style="left:1115px;width:79px;text-align:center;top:728px;font-size:16px;line-height:16px"><span class="td" style="display:inline-block;transform-origin:50% 0;">All</span></div>
<div class="a" style="left:1195px;width:79px;text-align:center;top:728px;font-size:16px;line-height:16px"><span class="td" style="display:inline-block;transform-origin:50% 0;">0</span></div>
<div class="a" style="left:1275px;width:79px;text-align:center;top:728px;font-size:16px;line-height:16px"><span class="td" style="display:inline-block;transform-origin:50% 0;">JW</span></div>
<div class="a td" style="left:1367px;top:728px;transform-origin:0 0;">2023-...</div>
<div class="a td" style="left:1502px;top:728px;transform-origin:0 0">Socket</div>
<div class="cb" style="left:240px;top:776px"></div>
<div class="a td" style="left:287px;top:777px;transform-origin:0 0;">KEK-QFN...</div>
<div class="a td" style="left:487px;top:777px;transform-origin:0 0;">TEST ...</div>
<div class="a td" style="left:567px;top:777px;transform-origin:0 0;">A1-2-...</div>
<div class="a td" style="left:727px;top:777px;transform-origin:0 0;">QFN3....</div>
<div class="a" style="left:795px;width:79px;text-align:center;top:777px;font-size:16px;line-height:16px"><span class="td" style="display:inline-block;transform-origin:50% 0;">KELVIN</span></div>
<div class="a td" style="left:887px;top:777px;transform-origin:0 0;">Pogo ...</div>
<div class="a" style="left:955px;width:79px;text-align:center;top:777px;font-size:16px;line-height:16px"><span class="td" style="display:inline-block;transform-origin:50% 0;">300000</span></div>
<div class="a" style="left:1035px;width:79px;text-align:center;top:777px;font-size:16px;line-height:16px"><span class="td" style="display:inline-block;transform-origin:50% 0;">Good</span></div>
<div class="a" style="left:1115px;width:79px;text-align:center;top:777px;font-size:16px;line-height:16px"><span class="td" style="display:inline-block;transform-origin:50% 0;">All</span></div>
<div class="a" style="left:1195px;width:79px;text-align:center;top:777px;font-size:16px;line-height:16px"><span class="td" style="display:inline-block;transform-origin:50% 0;">0</span></div>
<div class="a" style="left:1275px;width:79px;text-align:center;top:777px;font-size:16px;line-height:16px"><span class="td" style="display:inline-block;transform-origin:50% 0;">JW</span></div>
<div class="a td" style="left:1367px;top:777px;transform-origin:0 0;">2023-...</div>
<div class="a td" style="left:1502px;top:777px;transform-origin:0 0">Socket</div>
<div class="cb" style="left:240px;top:825px"></div>
<div class="a td" style="left:287px;top:826px;transform-origin:0 0;">KEK-QFN...</div>
<div class="a td" style="left:487px;top:826px;transform-origin:0 0;">TEST ...</div>
<div class="a td" style="left:567px;top:826px;transform-origin:0 0;">A1-2-...</div>
<div class="a td" style="left:727px;top:826px;transform-origin:0 0;">QFN3....</div>
<div class="a" style="left:795px;width:79px;text-align:center;top:826px;font-size:16px;line-height:16px"><span class="td" style="display:inline-block;transform-origin:50% 0;">KELVIN</span></div>
<div class="a td" style="left:887px;top:826px;transform-origin:0 0;">Pogo ...</div>
<div class="a" style="left:955px;width:79px;text-align:center;top:826px;font-size:16px;line-height:16px"><span class="td" style="display:inline-block;transform-origin:50% 0;">300000</span></div>
<div class="a" style="left:1035px;width:79px;text-align:center;top:826px;font-size:16px;line-height:16px"><span class="td" style="display:inline-block;transform-origin:50% 0;">Good</span></div>
<div class="a" style="left:1115px;width:79px;text-align:center;top:826px;font-size:16px;line-height:16px"><span class="td" style="display:inline-block;transform-origin:50% 0;">All</span></div>
<div class="a" style="left:1195px;width:79px;text-align:center;top:826px;font-size:16px;line-height:16px"><span class="td" style="display:inline-block;transform-origin:50% 0;">0</span></div>
<div class="a" style="left:1275px;width:79px;text-align:center;top:826px;font-size:16px;line-height:16px"><span class="td" style="display:inline-block;transform-origin:50% 0;">JW</span></div>
<div class="a td" style="left:1367px;top:826px;transform-origin:0 0;">2023-...</div>
<div class="a td" style="left:1502px;top:826px;transform-origin:0 0">Socket</div>
<div class="cb" style="left:240px;top:874px"></div>
<div class="a" style="left:1540px;top:229px;width:340px;height:648px;background:#fff;box-shadow:-3px 0 8px rgba(0,0,0,.08);overflow:hidden">
<div class="hl" style="left:0;top:0px;width:340px"></div>
<div class="hl" style="left:0;top:39px;width:340px"></div>
<div class="hl" style="left:0;top:88px;width:340px"></div>
<div class="hl" style="left:0;top:137px;width:340px"></div>
<div class="hl" style="left:0;top:186px;width:340px"></div>
<div class="hl" style="left:0;top:235px;width:340px"></div>
<div class="hl" style="left:0;top:284px;width:340px"></div>
<div class="hl" style="left:0;top:333px;width:340px"></div>
<div class="hl" style="left:0;top:382px;width:340px"></div>
<div class="hl" style="left:0;top:431px;width:340px"></div>
<div class="hl" style="left:0;top:480px;width:340px"></div>
<div class="hl" style="left:0;top:529px;width:340px"></div>
<div class="hl" style="left:0;top:578px;width:340px"></div>
<div class="hl" style="left:0;top:627px;width:340px"></div>
<div class="hl" style="left:0;top:647px;width:340px"></div>
<div class="vl" style="left:89px;top:0;height:648px"></div>
<div class="vl" style="left:339px;top:0;height:648px"></div>
<div class="a th" style="left:19px;top:12px">状态</div>
<svg class="a" style="left:54px;top:14px" width="10" height="13" viewBox="0 0 10 13"><path d="M5 0 L10 5 H0 Z M0 7.5 H10 L5 12.5 Z" fill="#b4b7be"/></svg>
<div class="a th" style="left:201px;top:12px">操作</div>
<div class="a" style="left:30px;top:57px;color:#67c23a;font-size:14px;line-height:16px">可用</div>
<div class="ob" style="left:115px;top:48px;background:#f56c6c">删除</div>
<div class="ob" style="left:191px;top:48px;background:#409eff">禁用</div>
<div class="ob" style="left:259px;top:48px;background:#909399">修改</div>
<div class="a" style="left:30px;top:106px;color:#67c23a;font-size:14px;line-height:16px">可用</div>
<div class="ob" style="left:115px;top:97px;background:#f56c6c">删除</div>
<div class="ob" style="left:191px;top:97px;background:#409eff">禁用</div>
<div class="ob" style="left:259px;top:97px;background:#909399">修改</div>
<div class="a" style="left:30px;top:155px;color:#67c23a;font-size:14px;line-height:16px">可用</div>
<div class="ob" style="left:115px;top:146px;background:#f56c6c">删除</div>
<div class="ob" style="left:191px;top:146px;background:#409eff">禁用</div>
<div class="ob" style="left:259px;top:146px;background:#909399">修改</div>
<div class="a" style="left:30px;top:204px;color:#67c23a;font-size:14px;line-height:16px">可用</div>
<div class="ob" style="left:115px;top:195px;background:#f56c6c">删除</div>
<div class="ob" style="left:191px;top:195px;background:#409eff">禁用</div>
<div class="ob" style="left:259px;top:195px;background:#909399">修改</div>
<div class="a" style="left:30px;top:253px;color:#67c23a;font-size:14px;line-height:16px">可用</div>
<div class="ob" style="left:115px;top:244px;background:#f56c6c">删除</div>
<div class="ob" style="left:191px;top:244px;background:#409eff">禁用</div>
<div class="ob" style="left:259px;top:244px;background:#909399">修改</div>
<div class="a" style="left:30px;top:302px;color:#67c23a;font-size:14px;line-height:16px">可用</div>
<div class="ob" style="left:115px;top:293px;background:#f56c6c">删除</div>
<div class="ob" style="left:191px;top:293px;background:#409eff">禁用</div>
<div class="ob" style="left:259px;top:293px;background:#909399">修改</div>
<div class="a" style="left:30px;top:351px;color:#67c23a;font-size:14px;line-height:16px">可用</div>
<div class="ob" style="left:115px;top:342px;background:#f56c6c">删除</div>
<div class="ob" style="left:191px;top:342px;background:#409eff">禁用</div>
<div class="ob" style="left:259px;top:342px;background:#909399">修改</div>
<div class="a" style="left:30px;top:400px;color:#67c23a;font-size:14px;line-height:16px">可用</div>
<div class="ob" style="left:115px;top:391px;background:#f56c6c">删除</div>
<div class="ob" style="left:191px;top:391px;background:#409eff">禁用</div>
<div class="ob" style="left:259px;top:391px;background:#909399">修改</div>
<div class="a" style="left:30px;top:449px;color:#67c23a;font-size:14px;line-height:16px">可用</div>
<div class="ob" style="left:115px;top:440px;background:#f56c6c">删除</div>
<div class="ob" style="left:191px;top:440px;background:#409eff">禁用</div>
<div class="ob" style="left:259px;top:440px;background:#909399">修改</div>
<div class="a" style="left:30px;top:498px;color:#67c23a;font-size:14px;line-height:16px">可用</div>
<div class="ob" style="left:115px;top:489px;background:#f56c6c">删除</div>
<div class="ob" style="left:191px;top:489px;background:#409eff">禁用</div>
<div class="ob" style="left:259px;top:489px;background:#909399">修改</div>
<div class="a" style="left:30px;top:547px;color:#67c23a;font-size:14px;line-height:16px">可用</div>
<div class="ob" style="left:115px;top:538px;background:#f56c6c">删除</div>
<div class="ob" style="left:191px;top:538px;background:#409eff">禁用</div>
<div class="ob" style="left:259px;top:538px;background:#909399">修改</div>
<div class="a" style="left:30px;top:596px;color:#67c23a;font-size:14px;line-height:16px">可用</div>
<div class="ob" style="left:115px;top:587px;background:#f56c6c">删除</div>
<div class="ob" style="left:191px;top:587px;background:#409eff">禁用</div>
<div class="ob" style="left:259px;top:587px;background:#909399">修改</div>
<div class="ob" style="left:115px;top:636px;background:#f56c6c">删除</div>
<div class="ob" style="left:191px;top:636px;background:#409eff">禁用</div>
<div class="ob" style="left:259px;top:636px;background:#909399">修改</div>
</div>
</div>
<div class="hl" style="left:220px;top:876px;width:1660px"></div>
<div class="a" style="left:221px;top:898px;width:1658px;height:30px;background:#fff;border-radius:4px;border:1px solid #ebeef5;box-shadow:0 0 12px rgba(0,0,0,.10)"></div>
</body></html>
